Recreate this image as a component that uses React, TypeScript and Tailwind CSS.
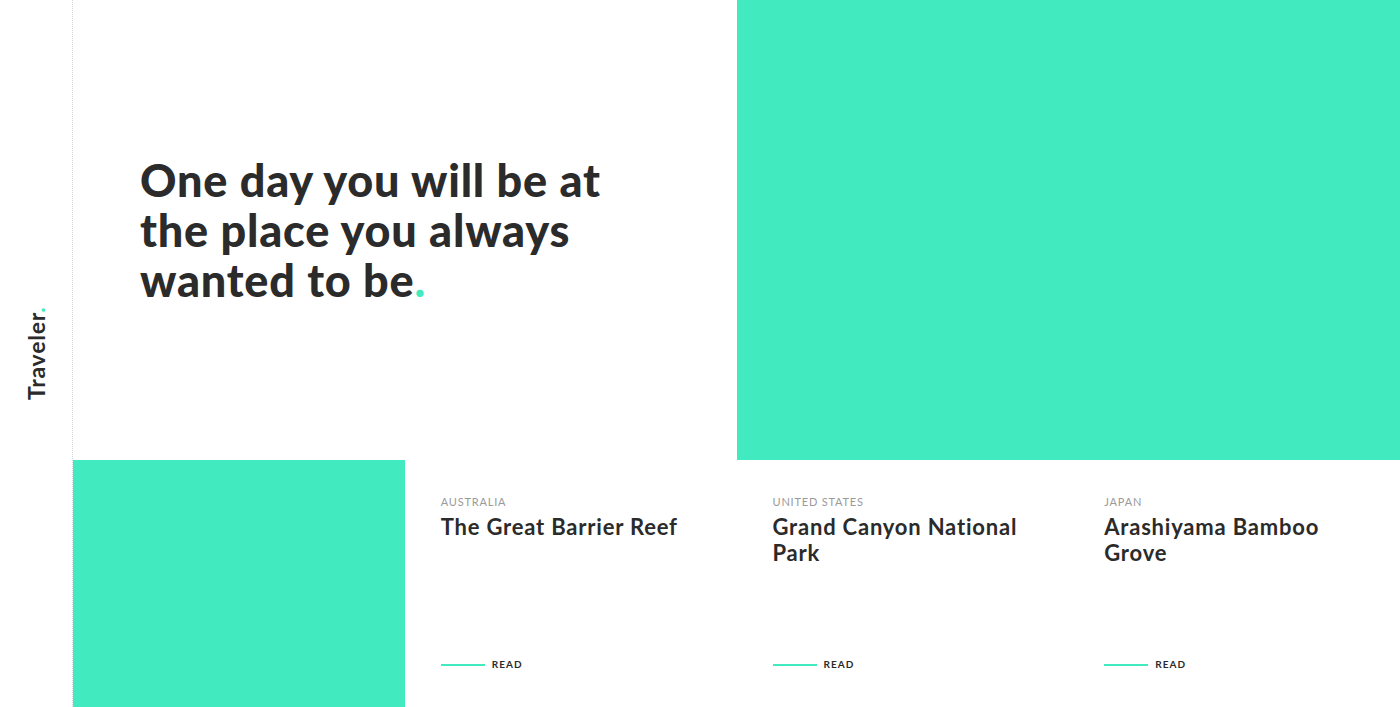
import React from 'react';

const places = [
  { country: 'AUSTRALIA', title: 'The Great Barrier Reef' },
  { country: 'UNITED STATES', title: 'Grand Canyon National Park' },
  { country: 'JAPAN', title: 'Arashiyama Bamboo Grove' },
];

const font = { fontFamily: 'Lato, "Noto Sans", sans-serif' };

const App: React.FC = () => {
  return (
    <div className="flex h-[707px] w-[1400px] bg-white text-[#2b2b2b] overflow-hidden" style={font}>
      <aside className="w-[73px] shrink-0 flex items-center justify-center border-r border-dotted border-gray-300">
        <div className="-rotate-90 whitespace-nowrap text-[23px] font-bold tracking-[0.8px]">
          Traveler<span className="text-[#42eac0]">.</span>
        </div>
      </aside>

      <main className="flex-1 grid grid-cols-4 grid-rows-[460px_247px]">
        <div className="col-span-2 flex items-center pl-[67px]">
          <h1 className="text-[45px] leading-[50px] font-black tracking-[0.8px]">
            One day you will be at
            <br />
            the place you always
            <br />
            wanted to be<span className="text-[#42eac0]">.</span>
          </h1>
        </div>
        <div className="col-span-2 bg-[#42eac0]" />

        <div className="bg-[#42eac0]" />
        {places.map((p) => (
          <div key={p.title} className="flex flex-col pl-9 pt-[34px] pb-[35px]">
            <span className="text-[11px] tracking-[0.8px] text-[#9a9a9a]">{p.country}</span>
            <h3 className="mt-[3px] w-[252px] text-[22px] leading-[26px] font-bold tracking-[0.8px]">{p.title}</h3>
            <div className="mt-auto flex items-center gap-[7px]">
              <span className="w-[44px] h-[2px] bg-[#42eac0]" />
              <span className="text-[10px] tracking-[1px] font-bold">READ</span>
            </div>
          </div>
        ))}
      </main>
    </div>
  );
};

export default App;
